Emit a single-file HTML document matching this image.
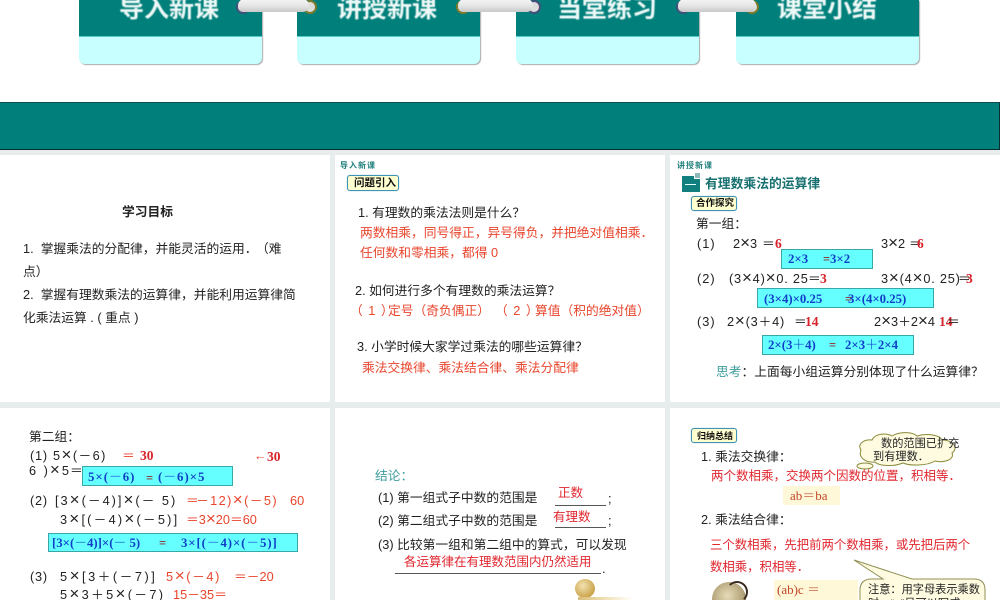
<!DOCTYPE html>
<html><head><meta charset="utf-8"><style>
html,body{margin:0;padding:0;background:#fff}
#p{position:relative;width:1000px;height:600px;overflow:hidden;background:#fff;font-family:"Liberation Sans","Noto Sans CJK SC",sans-serif;color:#222}
#p div{position:absolute}
.t{position:absolute;white-space:pre;font-size:12.75px;line-height:16px;height:16px;filter:blur(.3px);color:#222}
.r{color:#e8452c}.d{color:#e0262e;font-size:12.5px}
.s{font-family:"Liberation Serif","Noto Serif CJK SC",serif;font-weight:bold;color:#d8232a;font-size:13.5px}
.b{font-family:"Liberation Serif","Noto Serif CJK SC",serif;font-weight:bold;color:#0f3fc8;font-size:12.8px}
.e{font-family:"Liberation Serif",serif;font-weight:bold;color:#8a2a2a;font-size:12.5px}
x{font-size:17px;line-height:0;font-weight:normal}
.box{background:#66ffff;border:1px solid #3aa7a7;box-sizing:border-box}
.card{width:183px;height:64px;top:0;background:#c8ffff;border-radius:0 0 6px 6px;box-shadow:1px 1px 1px #aaa;overflow:hidden}
.card i{position:absolute;left:0;top:0;width:100%;height:36px;background:#007f7b;border-bottom:1px solid #5cc;display:block}
.ct{position:absolute;top:-5px;font-size:25px;line-height:28px;font-weight:bold;color:#eef9f7;white-space:pre;filter:blur(.4px)}
.lnk{height:13px;top:-1px;border-radius:7px;background:linear-gradient(180deg,#f6f6f6,#e4e4e4 55%,#c9c9c9)}
.ring{width:14px;height:14px;top:0;border-radius:50%;border:2px solid #44507a;box-sizing:border-box;background:#ddd}
.badge{background:#ffffd0;border:1px solid #3f93b5;border-radius:3px;box-sizing:border-box;box-shadow:0 0 1px #7bc}
.bt{font-size:10.5px;font-weight:bold;color:#111;line-height:14px}
.u{height:1px;background:#555}
</style></head><body><div id="p">
<!-- top cards -->
<div class="card" style="left:79px"><i></i></div>
<div class="card" style="left:297px"><i></i></div>
<div class="card" style="left:516px"><i></i></div>
<div class="card" style="left:736px"><i></i></div>
<span class="ct" style="left:119px">导入新课</span>
<span class="ct" style="left:337px">讲授新课</span>
<span class="ct" style="left:557px">当堂练习</span>
<span class="ct" style="left:777px">课堂小结</span>
<div class="ring" style="left:236px"></div>
<div class="ring" style="left:303px;border-color:#7d7b2a"></div>
<div class="ring" style="left:456px;border-color:#7d7b2a"></div>
<div class="ring" style="left:527px"></div>
<div class="ring" style="left:676px"></div>
<div class="ring" style="left:745px;border-color:#7d7b2a"></div>
<div class="lnk" style="left:238px;width:71px"></div>
<div class="lnk" style="left:458px;width:75px"></div>
<div class="lnk" style="left:678px;width:78px"></div>
<!-- band -->
<div style="left:0;top:102px;width:1000px;height:48px;background:#007f7b;border-top:1px solid #0d4d50;border-bottom:1px solid #0a2f30;border-right:1px solid #0a2f30;box-sizing:border-box"></div>
<!-- gutters -->
<div style="left:0;top:150px;width:1000px;height:5px;background:#e7ecec"></div>
<div style="left:0;top:402px;width:1000px;height:6px;background:#e7ecec"></div>
<div style="left:330px;top:150px;width:5px;height:450px;background:#e7ecec"></div>
<div style="left:665px;top:150px;width:5px;height:450px;background:#e7ecec"></div>

<!-- slide 1 -->
<span class="t" style="left:122px;top:204px;font-weight:bold">学习目标</span>
<span class="t" style="left:23px;top:241px">1.  掌握乘法的分配律，并能灵活的运用．</span>
<span class="t" style="left:256px;top:241px">（难</span>
<span class="t" style="left:23px;top:264px">点）</span>
<span class="t" style="left:23px;top:287px">2.  掌握有理数乘法的运算律，并能利用运算律简</span>
<span class="t" style="left:23px;top:310px">化乘法运算 . ( 重点 )</span>

<!-- slide 2 -->
<span class="t" style="left:340px;top:158px;font-size:8px;letter-spacing:1px;color:#1d7f7b;font-weight:bold">导入新课</span>
<div class="badge" style="left:347px;top:175px;width:52px;height:16px"></div>
<span class="t bt" style="left:354px;top:176px">问题引入</span>
<span class="t" style="left:358px;top:205px">1. 有理数的乘法法则是什么？</span>
<span class="t r" style="left:360px;top:225px">两数相乘，同号得正，异号得负，并把绝对值相乘．</span>
<span class="t r" style="left:360px;top:245px">任何数和零相乘，都得 0</span>
<span class="t" style="left:355px;top:283px">2. 如何进行多个有理数的乘法运算？</span>
<span class="t r" style="left:350px;top:303px;letter-spacing:1px">（ 1 ）</span>
<span class="t r" style="left:388px;top:303px">定号（奇负偶正）</span>
<span class="t r" style="left:495px;top:303px;letter-spacing:1px">（ 2 ）</span>
<span class="t r" style="left:535px;top:303px">算值（积的绝对值）</span>
<span class="t" style="left:357px;top:339px">3. 小学时候大家学过乘法的哪些运算律？</span>
<span class="t r" style="left:362px;top:360px">乘法交换律、乘法结合律、乘法分配律</span>

<!-- slide 3 -->
<span class="t" style="left:677px;top:158px;font-size:8px;letter-spacing:1px;color:#1d7f7b;font-weight:bold">讲授新课</span>
<div style="left:695px;top:173px;width:5px;height:5px;background:#8fb8b8"></div>
<div style="left:682px;top:176px;width:12px;height:16px;background:#107f7e"></div>
<div style="left:694px;top:179px;width:6px;height:13px;background:#107f7e"></div>
<div style="left:685px;top:184px;width:11px;height:1px;background:#dff"></div>
<span class="t" style="left:705px;top:176px;font-weight:bold;font-size:12.8px;color:#16706f">有理数乘法的运算律</span>
<div class="badge" style="left:691px;top:196px;width:46px;height:15px"></div>
<span class="t bt" style="left:696px;top:197px;font-size:9.5px">合作探究</span>
<span class="t" style="left:696px;top:216px">第一组：</span>
<span class="t" style="left:697px;top:236px;letter-spacing:1px">(1)</span>
<span class="t" style="left:733px;top:236px">2<x>×</x>3</span><span class="t" style="left:762px;top:236px">＝</span>
<span class="t s" style="left:775px;top:236px">6</span>
<span class="t" style="left:881px;top:236px">3<x>×</x>2</span><span class="t" style="left:909px;top:236px">＝</span>
<span class="t s" style="left:917px;top:236px">6</span>
<div class="box" style="left:781px;top:249px;width:92px;height:20px"></div>
<span class="t b" style="left:788px;top:251px">2×3</span><span class="t e" style="left:823px;top:251px">=</span><span class="t b" style="left:830px;top:251px">3×2</span>
<span class="t" style="left:697px;top:271px;letter-spacing:1px">(2)</span>
<span class="t" style="left:729px;top:271px;letter-spacing:.8px">(3<x>×</x>4)<x>×</x>0. 25</span><span class="t" style="left:808px;top:271px">＝</span>
<span class="t s" style="left:820px;top:271px">3</span>
<span class="t" style="left:881px;top:271px;letter-spacing:.8px">3<x>×</x>(4<x>×</x>0. 25)</span><span class="t" style="left:958px;top:271px">＝</span>
<span class="t s" style="left:966px;top:271px">3</span>
<div class="box" style="left:757px;top:288px;width:177px;height:20px"></div>
<span class="t b" style="left:764px;top:291px">(3×4)×0.25</span><span class="t e" style="left:845px;top:291px">=</span><span class="t b" style="left:848px;top:291px">3×(4×0.25)</span>
<span class="t" style="left:697px;top:314px;letter-spacing:1px">(3)</span>
<span class="t" style="left:727px;top:314px;letter-spacing:.8px">2<x>×</x>(3＋4)</span><span class="t" style="left:794px;top:314px">＝</span>
<span class="t s" style="left:805px;top:314px">14</span>
<span class="t" style="left:874px;top:314px">2<x>×</x>3＋2<x>×</x>4</span>
<span class="t s" style="left:939px;top:314px">14</span><span class="t" style="left:947px;top:314px">＝</span>
<div class="box" style="left:762px;top:335px;width:152px;height:20px"></div>
<span class="t b" style="left:768px;top:337px">2×(3＋4)</span><span class="t e" style="left:829px;top:337px">=</span><span class="t b" style="left:845px;top:337px">2×3＋2×4</span>
<span class="t" style="left:716px;top:364px"><span style="color:#3f9d9d">思考</span>：上面每小组运算分别体现了什么运算律？</span>

<!-- slide 4 -->
<span class="t" style="left:29px;top:429px">第二组：</span>
<span class="t" style="left:30px;top:448px;letter-spacing:.8px">(1)</span>
<span class="t" style="left:53px;top:448px;letter-spacing:1.4px">5<x>×</x>(－6)</span>
<span class="t r" style="left:122px;top:448px">＝</span>
<span class="t s" style="left:140px;top:448px">30</span>
<span class="t r" style="left:254px;top:448px">←</span>
<span class="t s" style="left:267px;top:449px">30</span>
<span class="t" style="left:29px;top:463px;letter-spacing:2px">6 )<x>×</x>5</span><span class="t" style="left:70px;top:463px">＝</span>
<div class="box" style="left:82px;top:466px;width:151px;height:20px"></div>
<span class="t b" style="left:88px;top:469px;letter-spacing:1px">5×(－6)</span><span class="t e" style="left:146px;top:470px">=</span><span class="t b" style="left:158px;top:469px;letter-spacing:1px">(－6)×5</span>
<span class="t" style="left:30px;top:493px;letter-spacing:.8px">(2)</span>
<span class="t" style="left:55px;top:493px;letter-spacing:2px">[3<x>×</x>(－4)]<x>×</x>(－ 5)</span>
<span class="t r" style="left:186px;top:493px">＝</span>
<span class="t r" style="left:196px;top:493px;letter-spacing:1.4px">－12)<x>×</x>(－5)</span>
<span class="t r" style="left:290px;top:493px">60</span>
<span class="t" style="left:60px;top:512px;letter-spacing:2.2px">3<x>×</x>[(－4)<x>×</x>(－5)]</span>
<span class="t r" style="left:186px;top:512px">＝3<x>×</x>20＝60</span>
<div class="box" style="left:48px;top:533px;width:250px;height:19px"></div>
<span class="t b" style="left:52px;top:535px">[3×(－4)]×(－ 5)</span><span class="t e" style="left:159px;top:535px">=</span><span class="t b" style="left:181px;top:535px;letter-spacing:.9px">3×[(－4)×(－5)]</span>
<span class="t" style="left:30px;top:569px;letter-spacing:.8px">(3)</span>
<span class="t" style="left:60px;top:569px;letter-spacing:2.5px">5<x>×</x>[3＋(－7)]</span>
<span class="t r" style="left:166px;top:569px;letter-spacing:1.6px">5<x>×</x>(－4)</span>
<span class="t r" style="left:234px;top:569px">＝－20</span>
<span class="t" style="left:60px;top:587px;letter-spacing:2.3px">5<x>×</x>3＋5<x>×</x>(－7)</span>
<span class="t r" style="left:173px;top:587px">15－35＝</span>

<!-- slide 5 -->
<span class="t" style="left:375px;top:468px;color:#3f9d9d">结论：</span>
<span class="t" style="left:378px;top:490px">(1) 第一组式子中数的范围是</span>
<span class="t d" style="left:558px;top:485px">正数</span>
<div class="u" style="left:555px;top:505px;width:51px"></div><span class="t" style="left:608px;top:491px">;</span>
<span class="t" style="left:378px;top:513px">(2) 第二组式子中数的范围是</span>
<span class="t d" style="left:553px;top:509px">有理数</span>
<div class="u" style="left:555px;top:527px;width:51px"></div><span class="t" style="left:608px;top:513px">;</span>
<span class="t" style="left:378px;top:537px">(3) 比较第一组和第二组中的算式，可以发现</span>
<span class="t d" style="left:404px;top:554px">各运算律在有理数范围内仍然适用</span>
<div class="u" style="left:395px;top:573px;width:206px"></div><span class="t" style="left:602px;top:561px">.</span>
<div style="left:575px;top:579px;width:20px;height:19px;border-radius:50%;background:radial-gradient(circle at 40% 35%,#f2e2b0,#c9a045 75%,#a88432)"></div>
<div style="left:578px;top:597px;width:55px;height:3px;background:linear-gradient(90deg,#d8bd78,#f3e7c4 60%,#fff)"></div>

<!-- slide 6 -->
<div class="badge" style="left:691px;top:428px;width:46px;height:15px"></div>
<span class="t bt" style="left:697px;top:429px;font-size:9px">归纳总结</span>
<span class="t" style="left:701px;top:449px">1. 乘法交换律：</span>
<span class="t d" style="left:711px;top:468px">两个数相乘，交换两个因数的位置，积相等．</span>
<div style="left:783px;top:486px;width:57px;height:19px;background:#fff8d8"></div>
<span class="t" style="left:790px;top:488px;font-family:'Liberation Serif','Noto Serif CJK SC',serif;color:#c0452a;font-size:13px">ab＝ba</span>
<span class="t" style="left:701px;top:512px">2. 乘法结合律：</span>
<span class="t d" style="left:710px;top:537px;font-size:12.4px">三个数相乘，先把前两个数相乘，或先把后两个</span>
<span class="t d" style="left:710px;top:559px;font-size:12.4px">数相乘，积相等．</span>
<svg style="position:absolute;left:855px;top:430px" width="110" height="40"><path d="M6 20C2 14 9 9 17 10C20 3 32 3 37 6C45 1 58 2 62 6C72 3 85 5 87 10C98 10 104 18 97 23C100 30 88 33 80 31C72 36 55 36 48 33C38 37 24 36 20 32C10 33 3 27 6 20Z" fill="#fffbe0" stroke="#8a8a3a"/></svg>
<svg style="position:absolute;left:855px;top:462px" width="20" height="10"><ellipse cx="10" cy="4" rx="8" ry="3" fill="#fffbe0" stroke="#8a8a3a"/></svg>
<span class="t" style="left:881px;top:436px;font-size:11.2px">数的范围已扩充</span>
<span class="t" style="left:873px;top:449px;font-size:11.2px">到有理数．</span>
<!-- globe -->
<div style="left:712px;top:582px;width:34px;height:34px;border-radius:50%;background:radial-gradient(circle at 45% 40%,#e6dcb8,#b4a47a 55%,#6a6a50)"></div>
<div style="left:726px;top:581px;width:22px;height:22px;border-radius:50%;border:2px solid #3a2a20;border-left-color:transparent;border-bottom-color:transparent;box-sizing:border-box"></div>
<div style="left:774px;top:580px;width:84px;height:20px;background:#fff8d8"></div>
<span class="t" style="left:777px;top:582px;font-family:'Liberation Serif','Noto Serif CJK SC',serif;color:#c0452a;font-size:13px">(ab)c ＝</span>
<svg style="position:absolute;left:850px;top:555px" width="145" height="45"><path d="M4 5L62 24H124Q135 24 135 35V60H10V35Q10 24 22 24H33Z" fill="#fffbe0" stroke="#8f8f55"/></svg>
<span class="t" style="left:868px;top:582px;font-size:11.2px">注意：用字母表示乘数</span>
<span class="t" style="left:868px;top:596px;font-size:11.2px">时，“×”号可以写成</span>
</div></body></html>
